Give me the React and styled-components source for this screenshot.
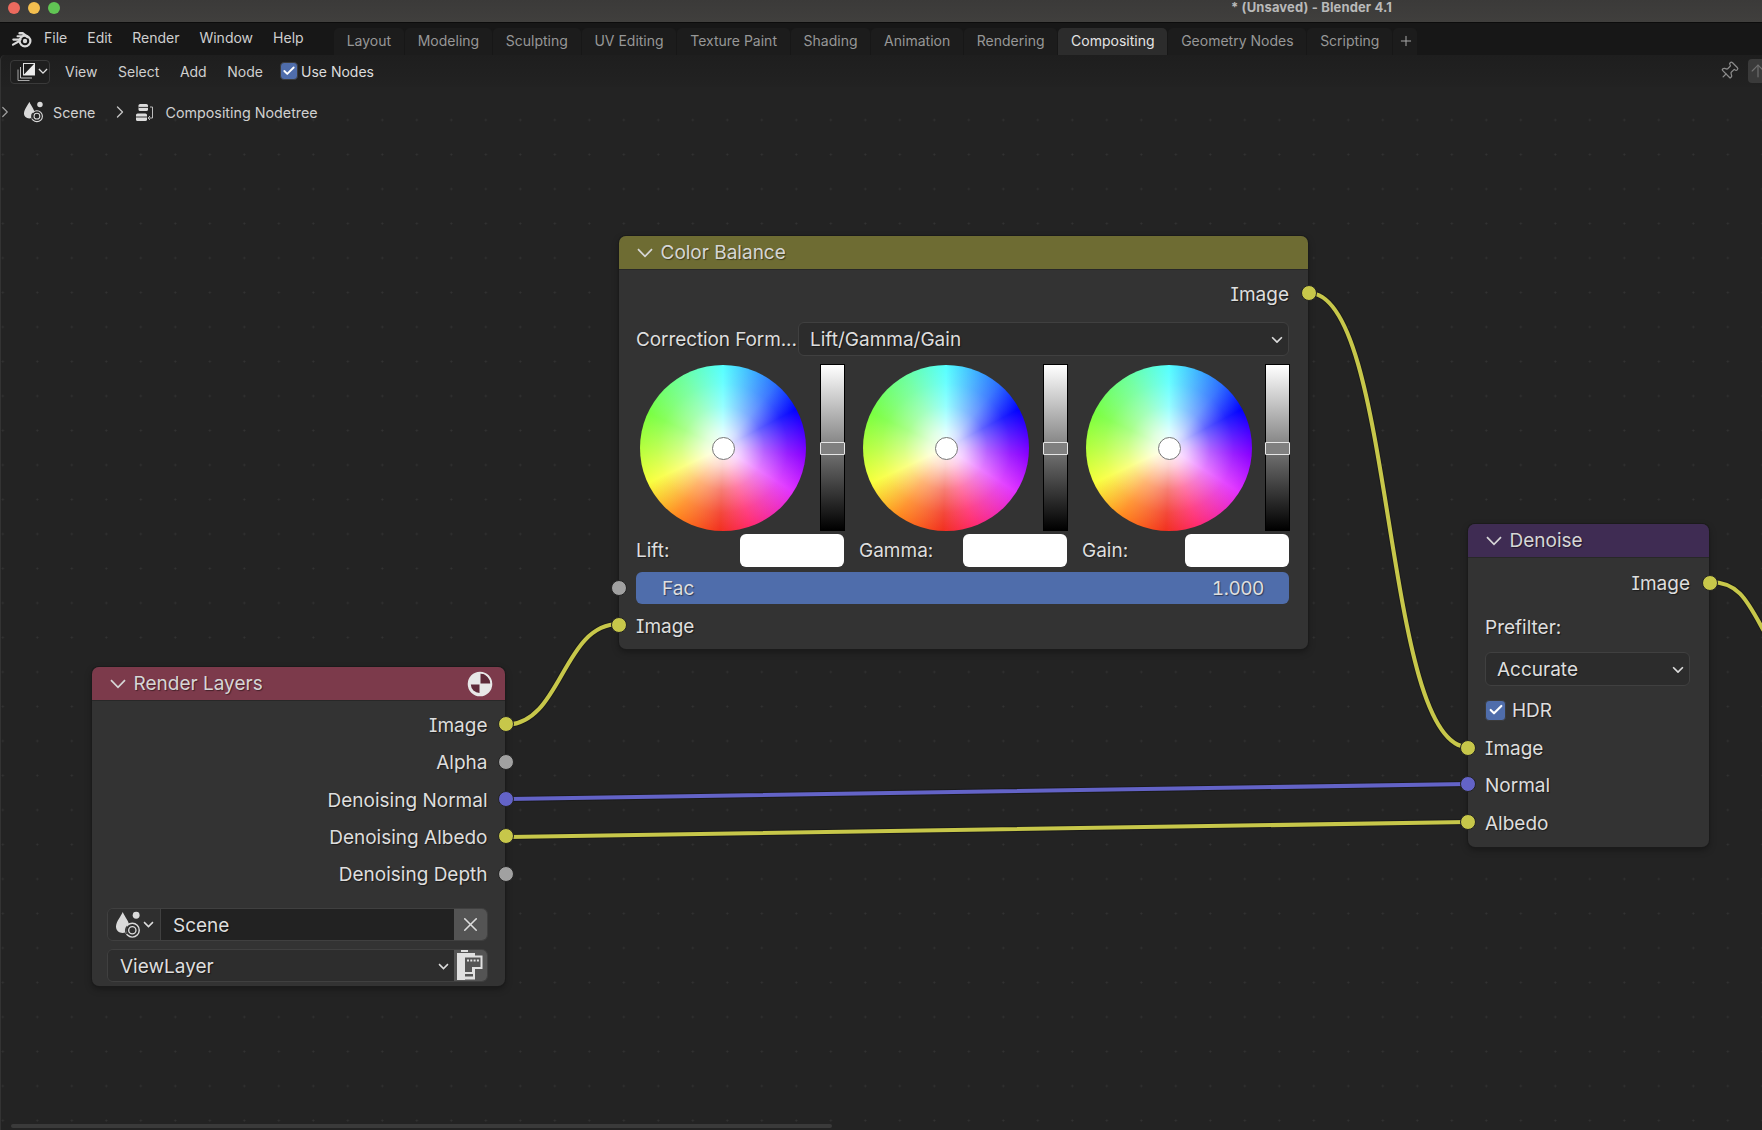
import React from "react";
import styled, { createGlobalStyle } from "styled-components";
import { X, Pin, ChevronRight, Plus, ArrowUp, Check } from "lucide-react";

const Global = createGlobalStyle`
  html, body { margin: 0; padding: 0; background: #232323; }
  * { box-sizing: border-box; }
`;

const Page = styled.div`
  width: 1762px; height: 1130px; overflow: hidden;
  display: flex; flex-direction: column;
  font-family: Inter, "Liberation Sans", sans-serif;
  font-feature-settings: "cv08" 1;
  color: #d8d8d8; background: #181818;
`;
const TitleBar = styled.div`
  height: 23px; flex: none; display: flex; align-items: flex-start;
  background: linear-gradient(#3b3a39, #403f3d); border-bottom: 1px solid #0c0c0c;
  padding: 2px 0 0 8px; gap: 8px; position: relative;
`;
const Light = styled.span`
  width: 12px; height: 12px; border-radius: 50%; background: ${p => p.$c};
`;
const TitleText = styled.div`
  position: absolute; left: 1231px; top: -1px; font-size: 13px; font-weight: 700; letter-spacing: .13px;
  line-height: 16px; color: #b9b9b9;
`;
const TopBar = styled.div`
  height: 32px; flex: none; display: flex; align-items: center; background: #171717; padding-left: 11px;
`;
const Menu = styled.div`
  display: flex; gap: 20px; margin-left: 11px; font-size: 14px; color: #cfcfcf; margin-top: -3px;
`;
const Tabs = styled.div`
  display: flex; gap: 1px; margin-left: 30.3px; align-self: flex-end; height: 27px;
`;
const Tab = styled.div`
  padding: 0 12.8px 2px; font-size: 14px; display: flex; align-items: center;
  border-radius: 5px 5px 0 0; background: ${p => (p.$active ? "#2c2c2c" : "#1c1c1c")};
  color: ${p => (p.$active ? "#e4e4e4" : "#979797")};
`;
const PlusTab = styled(Tab)`
  padding: 0 3px 2px 5px;
`;
const Editor = styled.div`
  position: relative; flex: 1; background-color: #232323;
  background-image: radial-gradient(circle at center, #333 0.9px, transparent 1.1px);
  background-size: 34.5px 34.5px; background-position: -15.45px 13.25px;
  border-left: 1px solid #333; border-radius: 5px 0 0 0; overflow: hidden;
`;
const HeaderRow = styled.div`
  height: 32px; display: flex; align-items: center; padding-left: 9px;
  background: linear-gradient(#1e1e1e, #222);
  border-radius: 5px 0 0 0; font-size: 14px; color: #cfcfcf; position: relative;
`;
const TypeButton = styled.div`
  width: 40px; height: 24px; border: 1px solid #3a3a3a; border-radius: 4px; background: #1f1f1f;
  display: flex; align-items: center; padding-left: 5px; gap: 2px; margin-top: 1px;
`;
const HeaderMenu = styled.div`
  display: flex; gap: 20.6px; margin-left: 15px;
`;
const CheckBox = styled.span`
  width: ${p => p.$s}px; height: ${p => p.$s}px; border-radius: 4px; background: #4f6dab;
  border: 1px solid #3b3b3b; display: inline-flex; align-items: center; justify-content: center; flex: none;
`;
const UseNodes = styled.div`
  display: flex; align-items: center; gap: 3px; margin-left: 17px; color: #dcdcdc;
`;
const PinWrap = styled.div`
  position: absolute; left: 1718px; top: 6px; color: #8a8a8a;
`;
const CornerTile = styled.div`
  position: absolute; left: 1747px; top: 4px; width: 30px; height: 24px; border-radius: 4px;
  background: #3a3a3a; color: #6f6f6f; display: flex; align-items: center;
`;
const Breadcrumb = styled.div`
  height: 36px; display: flex; align-items: center; font-size: 14.3px; color: #cfcfcf;
  margin-top: 7px;
`;
const CrumbToggle = styled.span`
  display: flex; color: #a0a0a0; margin: 0 10px 0 -5px;
`;
const CrumbText = styled.span`
  margin-left: ${p => p.$ml}px;
`;
const CrumbSep = styled.span`
  display: flex; color: #c4c4c4; margin: 0 5px 0 15px;
`;

const WireLayer = styled.svg`
  position: absolute; left: -1px; top: -55px; width: 1762px; height: 1130px; pointer-events: none;
`;
const ScrollBar = styled.div`
  position: absolute; left: 10px; top: 1069px; width: 821px; height: 4px; border-radius: 2px; background: #3a3a3a;
`;

const NodeBox = styled.div`
  position: absolute; left: ${p => p.$x - 1}px; top: ${p => p.$y - 55}px; width: ${p => p.$w}px; height: ${p => p.$h}px;
  background: #333; border-radius: 7px; box-shadow: 0 0 0 1px #1b1b1b, 0 3px 7px rgba(0,0,0,.35);
  font-size: 19px; color: #dedede; text-shadow: 1px 1px 1px rgba(0,0,0,.45);
  display: flex; flex-direction: column;
`;
const NodeHeader = styled.div`
  height: 33px; flex: none; border-radius: 7px 7px 0 0; background: ${p => p.$c};
  display: flex; align-items: center; padding-left: 18px; padding-right: 12px; gap: 7.5px; color: #d6d6d6;
  box-shadow: 0 1px 0 rgba(0,0,0,.2);
`;
const HeaderIconRight = styled.span`
  margin-left: auto; display: flex;
`;
const NodeBody = styled.div`
  flex: 1; display: flex; flex-direction: column; padding: ${p => p.$pad || "0 19px 0 17px"};
`;
const Row = styled.div`
  height: ${p => p.$h || 37.4}px; flex: none; display: flex; align-items: center; position: relative; padding-top: 2px;
  justify-content: ${p => (p.$right ? "flex-end" : "flex-start")};
  margin-top: ${p => p.$mt || 0}px;
`;
const FlatRow = styled(Row)`
  padding-top: 0;
`;
const Socket = styled.span`
  position: absolute; width: 16px; height: 16px; border-radius: 50%; top: 50%; margin-top: -8px;
  background: ${p => p.$c}; border: 1.5px solid #232323;
  ${p => (p.$side === "left" ? `left: ${p.$off ?? -25}px;` : `right: ${p.$off ?? -26}px;`)}
`;
const Select = styled.div`
  flex: 1; height: 34px; background: #2c2c2c; border: 1px solid #404040; border-radius: 6px;
  display: flex; align-items: center; justify-content: space-between; padding: 1px 5px 0 11px; color: #dedede; min-width: 0;
`;
const CorrectionLabel = styled.span`
  width: 162px; flex: none; white-space: nowrap; letter-spacing: -.1px;
`;
const WheelRow = styled.div`
  display: flex; height: 167px; margin-top: 8px; flex: none; gap: 14px;
`;
const WheelUnit = styled.div`
  display: flex; flex: none; width: ${p => p.$w}px; justify-content: space-between;
`;
const Wheel = styled.div`
  width: 166px; height: 166px; border-radius: 50%; position: relative; margin: .5px 0 0 3.5px; flex: none;
  background:
    radial-gradient(circle closest-side, rgba(255,255,255,1) 0%, rgba(255,255,255,.78) 22%, rgba(255,255,255,.38) 50%, rgba(255,255,255,.12) 78%, rgba(255,255,255,0) 100%),
    conic-gradient(#55ffff 0deg, #2a6cff 40deg, #0000ff 62deg, #8a00ff 95deg, #e030ff 122deg, #ff2a70 160deg, #f2301f 182deg, #ff8a1f 215deg, #f8ff3c 245deg, #b4ff3c 270deg, #78ff40 295deg, #6cff9c 330deg, #55ffff 360deg);
  &::after {
    content: ""; position: absolute; left: 50%; top: 50%; width: 21px; height: 21px; margin: -10.5px 0 0 -10.5px;
    border-radius: 50%; background: #fff; border: 1px solid #777;
  }
`;
const ValueBar = styled.div`
  width: 25px; height: 167px; position: relative; border: 1px solid #000; flex: none;
  background: linear-gradient(#fff, #808080 50%, #777 50%, #000);
  &::after {
    content: ""; position: absolute; left: -1px; right: -1px; top: 77px; height: 11px;
    background: #808080; border: 1px solid #e6e6e6; border-radius: 1px;
  }
`;
const SwatchRow = styled.div`
  display: flex; height: 33px; margin-top: 3px; flex: none; align-items: center; gap: 15px;
`;
const SwatchUnit = styled.div`
  width: ${p => p.$w}px; display: flex; align-items: center; justify-content: space-between; flex: none;
`;
const Swatch = styled.div`
  width: 104px; height: 33px; border-radius: 6px; background: #fff; flex: none;
`;
const FacBar = styled.div`
  height: 32px; margin-top: 5px; flex: none; background: #4f6dab; border-radius: 6px; display: flex;
  justify-content: space-between; align-items: center; padding: 0 25px 0 26px; position: relative; color: #dedede;
`;
const FacValue = styled.span`
  font-variant-numeric: tabular-nums; font-feature-settings: "tnum" 1; letter-spacing: -.45px;
`;
const FieldRow = styled.div`
  height: 33px; display: flex; flex: none; margin-top: ${p => p.$mt || 0}px; border: 1px solid #404040; border-radius: 6px; overflow: hidden;
`;
const FieldIcon = styled.div`
  width: 53px; flex: none; background: #2f2f2f; display: flex; align-items: center; padding-left: 8px; border-right: 1px solid #404040; gap: 3px;
`;
const FieldInput = styled.div`
  flex: 1; background: #222; display: flex; align-items: center; padding: 2px 0 0 12px;
`;
const FieldDrop = styled.div`
  flex: 1; background: #2d2d2d; display: flex; align-items: center; justify-content: space-between; padding: 2px 5px 0 12px;
`;
const FieldButton = styled.div`
  width: 33px; flex: none; background: #545454; display: flex; align-items: center; justify-content: center; color: #dcdcdc;
`;
const HdrLabel = styled.span`
  margin-left: 6px;
`;

const YEL = "#c7c74a", GRY = "#a1a1a1", PUR = "#6363c7";

const BlenderLogo = () => (
  <svg width="22" height="17" viewBox="0 0 22 17" fill="none" stroke="#dadada" strokeLinecap="round">
    <path d="M8.6 2.2H11.6L16.5 6" strokeWidth="2.5"/>
    <path d="M2.4 8.6H9.5" strokeWidth="2.3"/>
    <path d="M6.5 5.2H11" strokeWidth="2"/>
    <path d="M8 10.2L2 13.6" strokeWidth="2.2"/>
    <circle cx="14" cy="10" r="5.4" strokeWidth="2.2"/>
    <circle cx="14" cy="10" r="2.2" fill="#dadada" stroke="none"/>
  </svg>
);
const CompositorIcon = () => (
  <svg width="20" height="20" viewBox="0 0 20 20">
    <path d="M2 7.5V18.5H13.5" fill="none" stroke="#a8a8a8" strokeWidth="1"/>
    <path d="M4.5 5V16H16" fill="none" stroke="#c8c8c8" strokeWidth="1"/>
    <rect x="7.5" y="1.5" width="11" height="11.5" fill="#1f1f1f" stroke="#e0e0e0" strokeWidth="1"/>
    <path d="M18.5 1.5V13H7.5Z" fill="#ececec"/>
  </svg>
);
const SceneIcon = ({ w, bg }) => (
  <svg width={w} height={w * 28 / 25} viewBox="0 0 25 28">
    <path fill="#dadada" d="M7 1C9 6 14 11 14 16.5C14 20 11 23 7 23C3 23 0 20 0 16.5C0 11 5 6 7 1Z"/>
    <circle cx="21" cy="4.5" r="3.6" fill="#dadada"/>
    <circle cx="17" cy="20" r="7.2" fill={bg} stroke="#dadada" strokeWidth="1.5"/>
    <circle cx="17" cy="20" r="3.8" fill="none" stroke="#dadada" strokeWidth="1.4"/>
    <path d="M11.5 16 A7.5 7.5 0 0 0 11 24" fill="none" stroke={bg} strokeWidth="1.4" opacity=".9"/>
  </svg>
);
const NodeTreeIcon = () => (
  <svg width="19" height="19" viewBox="0 0 19 19">
    <rect x="3.5" y="1" width="9.5" height="7" rx="1.6" fill="#dcdcdc"/>
    <path d="M3.5 4.4h9.5" stroke="#1f1f1f" strokeWidth=".9"/>
    <rect x="1" y="10.5" width="11" height="7.5" rx="1.6" fill="#dcdcdc"/>
    <path d="M1 14h11" stroke="#1f1f1f" strokeWidth=".9"/>
    <path d="M15 4h2.5v11h-4M15 13l-2 2 2 2" fill="none" stroke="#bdbdbd" strokeWidth="1"/>
  </svg>
);
const RenderBall = () => (
  <svg width="26" height="26" viewBox="0 0 26 26">
    <circle cx="13" cy="13" r="11.5" fill="#e8e8e8"/>
    <path d="M13.5 2.6A10.4 10.4 0 0 1 23.4 12.5H13.5Z" fill="#5f2b3a"/>
    <path d="M12.5 13.5V22A9 9 0 0 1 3.8 13.5Z" fill="#5f2b3a"/>
    <circle cx="13" cy="13" r="11.5" fill="none" stroke="#e8e8e8" strokeWidth="1.6"/>
  </svg>
);
const LayerIcon = () => (
  <svg width="26" height="31" viewBox="0 0 26 31">
    <rect x="4" y="0" width="7" height="2" fill="#e0e0e0"/>
    <rect x="0" y="3" width="8" height="27" fill="#e0e0e0"/>
    <rect x="0" y="3" width="18" height="3" fill="#e0e0e0"/>
    <rect x="0" y="26.5" width="18" height="3" fill="#e0e0e0"/>
    <path d="M17 18V29" stroke="#e0e0e0" strokeWidth="2"/>
    <path d="M8 6.5H24.5V18H16V23H8" fill="#545454" stroke="#e0e0e0" strokeWidth="2"/>
    <path d="M10 10.5H22" stroke="#e0e0e0" strokeWidth="2" strokeDasharray="2 1.3"/>
  </svg>
);
const BigChev = () => (
  <svg width="16" height="10" viewBox="0 0 16 10" fill="none" stroke="#d6d6d6" strokeWidth="1.7">
    <path d="M1 1.2L8 8.4L15 1.2"/>
  </svg>
);
const SmallChev = ({ s = 12, c = "#dcdcdc" }) => (
  <svg width={s} height={s * .65} viewBox="0 0 12 8" fill="none" stroke={c} strokeWidth="1.7">
    <path d="M1 1.3L6 6.3L11 1.3"/>
  </svg>
);

const wires = [
  { d: "M1309 293 C 1395 293, 1382 747, 1468 747", c: YEL },
  { d: "M505 725 C 562 725, 562 624, 619 624", c: YEL },
  { d: "M505 799 L 1468 784", c: PUR },
  { d: "M505 837 L 1468 822", c: YEL },
  { d: "M1710 582 C 1745 582, 1750 610, 1775 650", c: YEL },
];

const tabs = ["Layout","Modeling","Sculpting","UV Editing","Texture Paint","Shading","Animation","Rendering","Compositing","Geometry Nodes","Scripting"];

const ColorWheelUnit = ({ w }) => (
  <WheelUnit $w={w}><Wheel /><ValueBar /></WheelUnit>
);

export default function App() {
  return (
    <Page>
      <Global />
      <TitleBar>
        <Light $c="#ec6a5e" /><Light $c="#f4bf4f" /><Light $c="#61c554" />
        <TitleText>* (Unsaved) - Blender 4.1</TitleText>
      </TitleBar>
      <TopBar>
        <BlenderLogo />
        <Menu><span>File</span><span>Edit</span><span>Render</span><span>Window</span><span>Help</span></Menu>
        <Tabs>
          {tabs.map(t => <Tab key={t} $active={t === "Compositing"}>{t}</Tab>)}
          <PlusTab><Plus size={16} strokeWidth={1.5} color="#a8a8a8" /></PlusTab>
        </Tabs>
      </TopBar>
      <Editor>
        <HeaderRow>
          <TypeButton><CompositorIcon /><SmallChev s={10} /></TypeButton>
          <HeaderMenu><span>View</span><span>Select</span><span>Add</span><span>Node</span></HeaderMenu>
          <UseNodes><CheckBox $s={18}><Check size={14} color="#fff" strokeWidth={3.2} /></CheckBox>Use Nodes</UseNodes>
          <PinWrap><Pin size={20} strokeWidth={1.5} style={{ transform: "rotate(45deg)" }} /></PinWrap>
          <CornerTile><ArrowUp size={20} strokeWidth={1.4} /></CornerTile>
        </HeaderRow>
        <Breadcrumb>
          <CrumbToggle><ChevronRight size={18} strokeWidth={1.6} /></CrumbToggle>
          <SceneIcon w={19} bg="#232323" />
          <CrumbText $ml={10}>Scene</CrumbText>
          <CrumbSep><ChevronRight size={20} strokeWidth={1.6} /></CrumbSep>
          <NodeTreeIcon />
          <CrumbText $ml={11}>Compositing Nodetree</CrumbText>
        </Breadcrumb>

        <WireLayer viewBox="0 0 1762 1130">
          {wires.map((w, i) => <path key={i} d={w.d} fill="none" stroke="rgba(20,20,20,.55)" strokeWidth="6" />)}
          {wires.map((w, i) => <path key={i} d={w.d} fill="none" stroke={w.c} strokeWidth="4.1" strokeLinecap="round" />)}
        </WireLayer>

        <NodeBox $x={619} $y={236} $w={689} $h={413}>
          <NodeHeader $c="#6e6c33"><BigChev />Color Balance</NodeHeader>
          <NodeBody>
            <Row $right $h={48}>Image<Socket $c={YEL} $side="right" $off={-28} /></Row>
            <FlatRow $h={34} $mt={5}>
              <CorrectionLabel>Correction Form...</CorrectionLabel>
              <Select>Lift/Gamma/Gain<SmallChev /></Select>
            </FlatRow>
            <WheelRow>
              <ColorWheelUnit w={209} /><ColorWheelUnit w={209} /><ColorWheelUnit w={208} />
            </WheelRow>
            <SwatchRow>
              <SwatchUnit $w={208}><span>Lift:</span><Swatch /></SwatchUnit>
              <SwatchUnit $w={208}><span>Gamma:</span><Swatch /></SwatchUnit>
              <SwatchUnit $w={207}><span>Gain:</span><Swatch /></SwatchUnit>
            </SwatchRow>
            <FacBar><span>Fac</span><FacValue>1.000</FacValue><Socket $c={GRY} $side="left" $off={-25} /></FacBar>
            <Row $h={42}>Image<Socket $c={YEL} $side="left" /></Row>
          </NodeBody>
        </NodeBox>

        <NodeBox $x={92} $y={667} $w={413} $h={319}>
          <NodeHeader $c="#7c3a4b"><BigChev />Render Layers<HeaderIconRight><RenderBall /></HeaderIconRight></NodeHeader>
          <NodeBody $pad="5.6px 17.5px 0 15px">
            <Row $right>Image<Socket $c={YEL} $side="right" $off={-26} /></Row>
            <Row $right>Alpha<Socket $c={GRY} $side="right" $off={-26} /></Row>
            <Row $right>Denoising Normal<Socket $c={PUR} $side="right" $off={-26} /></Row>
            <Row $right>Denoising Albedo<Socket $c={YEL} $side="right" $off={-26} /></Row>
            <Row $right>Denoising Depth<Socket $c={GRY} $side="right" $off={-26} /></Row>
            <FieldRow $mt={15.4}>
              <FieldIcon><SceneIcon w={24} bg="#2f2f2f" /><SmallChev s={11} /></FieldIcon>
              <FieldInput>Scene</FieldInput>
              <FieldButton><X size={23} strokeWidth={1.6} /></FieldButton>
            </FieldRow>
            <FieldRow $mt={8}>
              <FieldDrop>ViewLayer<SmallChev s={11} /></FieldDrop>
              <FieldButton><LayerIcon /></FieldButton>
            </FieldRow>
          </NodeBody>
        </NodeBox>

        <NodeBox $x={1468} $y={524} $w={241} $h={323}>
          <NodeHeader $c="#3f2c53"><BigChev />Denoise</NodeHeader>
          <NodeBody $pad="7px 19px 0 17px">
            <Row $right $h={37}>Image<Socket $c={YEL} $side="right" $off={-27.5} /></Row>
            <Row $h={51}>Prefilter:</Row>
            <FlatRow $h={34}><Select>Accurate<SmallChev /></Select></FlatRow>
            <FlatRow $h={42} $mt={3}>
              <CheckBox $s={21}><Check size={16} color="#fff" strokeWidth={3.2} /></CheckBox>
              <HdrLabel>HDR</HdrLabel>
            </FlatRow>
            <Row $h={33}>Image<Socket $c={YEL} $side="left" /></Row>
            <Row $h={40}>Normal<Socket $c={PUR} $side="left" /></Row>
            <Row $h={36}>Albedo<Socket $c={YEL} $side="left" /></Row>
          </NodeBody>
        </NodeBox>

        <ScrollBar />
      </Editor>
    </Page>
  );
}
